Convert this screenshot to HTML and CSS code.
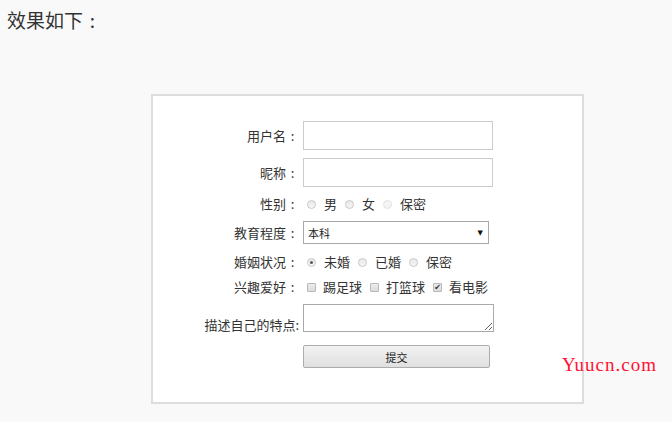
FILE: index.html
```html
<!DOCTYPE html>
<html lang="zh-CN">

<head>
    <meta charset="UTF-8">
    <title>表单</title>
    <link rel="stylesheet" href="styles.css">
</head>

<body>
    <p class="intro">效果如下<span class="colon">:</span></p>
    <div class="panel">
        <form class="form">
            <div class="form-row">
                <label class="label">用户名<span class="colon">:</span></label>
                <input type="text" class="text-input">
            </div>
            <div class="form-row">
                <label class="label">昵称<span class="colon">:</span></label>
                <input type="text" class="text-input">
            </div>
            <div class="form-row row-small">
                <label class="label">性别<span class="colon">:</span></label>
                <span class="radio"></span><span class="opt">男</span>
                <span class="radio"></span><span class="opt">女</span>
                <span class="radio faded"></span><span class="opt">保密</span>
            </div>
            <div class="form-row row-select">
                <label class="label">教育程度<span class="colon">:</span></label>
                <div class="select">
                    <span>本科</span>
                    <span class="arrow">&#9660;</span>
                </div>
            </div>
            <div class="form-row row-small">
                <label class="label">婚姻状况<span class="colon">:</span></label>
                <span class="radio checked"></span><span class="opt">未婚</span>
                <span class="radio"></span><span class="opt">已婚</span>
                <span class="radio"></span><span class="opt">保密</span>
            </div>
            <div class="form-row row-small">
                <label class="label">兴趣爱好<span class="colon">:</span></label>
                <span class="checkbox"></span><span class="opt">踢足球</span>
                <span class="checkbox"></span><span class="opt">打篮球</span>
                <span class="checkbox checked">&#10004;</span><span class="opt">看电影</span>
            </div>
            <div class="form-row row-area">
                <label class="label">描述自己的特点:</label>
                <textarea class="textarea"></textarea>
            </div>
            <div class="form-row">
                <span class="label"></span>
                <button type="button" class="submit-btn">提交</button>
            </div>
        </form>
    </div>
    <div class="watermark">Yuucn.com</div>
</body>

</html>
```

FILE: styles.css
```css
body {
    margin: 0;
    padding: 0;
    background-color: #f9f9f9;
    font-family: "Noto Sans CJK SC", "Noto Sans", sans-serif;
    color: #333;
    position: relative;
    height: 422px;
    overflow: hidden;
}

/* full-width colon, centred like the original font */
.colon {
    display: inline-block;
    width: 1em;
    text-align: center;
}

.intro {
    margin: 0;
    padding: 6px 0 0 7px;
    font-size: 19px;
    line-height: 28px;
    color: #333;
}

.panel {
    margin: 60px 0 0 151px;
    width: 429px;
    height: 306px;
    border: 2px solid #ddd;
    background-color: #fff;
}

.form {
    padding-top: 25px;
}

.form-row {
    display: flex;
    align-items: center;
    margin-bottom: 8px;
    font-size: 13px;
}

.label {
    width: 146px;
    margin-right: 4px;
    text-align: right;
    color: #333;
    line-height: 16px;
}

.text-input {
    width: 190px;
    height: 29px;
    box-sizing: border-box;
    border: 1px solid #ccc;
    margin: 0;
    padding: 0;
}

.row-small {
    height: 16px;
    margin-top: 9px;
    margin-bottom: 9px;
}

.row-select {
    margin-bottom: 10px;
}

.radio {
    width: 9px;
    height: 9px;
    box-sizing: border-box;
    border: 1px solid #c8c8c8;
    border-radius: 50%;
    background: linear-gradient(#e9e9e9, #f6f6f6);
    margin: 0 8px 0 4px;
    display: flex;
    align-items: center;
    justify-content: center;
}

.radio.faded {
    border-color: #e2e2e2;
    background: #f4f4f4;
}

.radio.checked::after {
    content: "";
    width: 3px;
    height: 3px;
    border-radius: 50%;
    background-color: #555;
}

.checkbox {
    width: 9px;
    height: 9px;
    box-sizing: border-box;
    border: 1px solid #b8b8b8;
    border-radius: 1px;
    background: linear-gradient(#ececec, #dcdcdc);
    margin: 0 7px 0 4px;
    font-size: 8px;
    line-height: 7px;
    text-align: center;
    color: #333;
    font-family: "DejaVu Sans", sans-serif;
}

.opt {
    color: #333;
    line-height: 16px;
    margin-right: 4px;
}

.select {
    width: 186px;
    height: 23px;
    box-sizing: border-box;
    border: 1px solid #a9a9a9;
    display: flex;
    align-items: center;
    justify-content: space-between;
    padding: 0 5px 0 4px;
    font-size: 11px;
    color: #222;
}

.arrow {
    font-size: 7px;
    color: #111;
    font-family: "DejaVu Sans", sans-serif;
}

.row-area {
    align-items: flex-end;
    margin-bottom: 13px;
}

.row-area .label {
    line-height: 14px;
    margin-right: 1px;
    padding-right: 3px;
}

.textarea {
    width: 191px;
    height: 28px;
    box-sizing: border-box;
    border: 1px solid #a9a9a9;
    margin: 0;
    padding: 0;
    resize: both;
}

.submit-btn {
    width: 187px;
    height: 23px;
    margin: 0;
    border: 1px solid #acacac;
    border-radius: 2px;
    background: linear-gradient(#f2f2f2, #e0e0e0);
    font-family: "Noto Sans CJK SC", sans-serif;
    font-size: 11px;
    color: #222;
    padding: 0;
}

.watermark {
    position: absolute;
    left: 562px;
    top: 354px;
    font-family: "Liberation Serif", serif;
    font-size: 19px;
    letter-spacing: 1px;
    color: #ff1133;
}
```
